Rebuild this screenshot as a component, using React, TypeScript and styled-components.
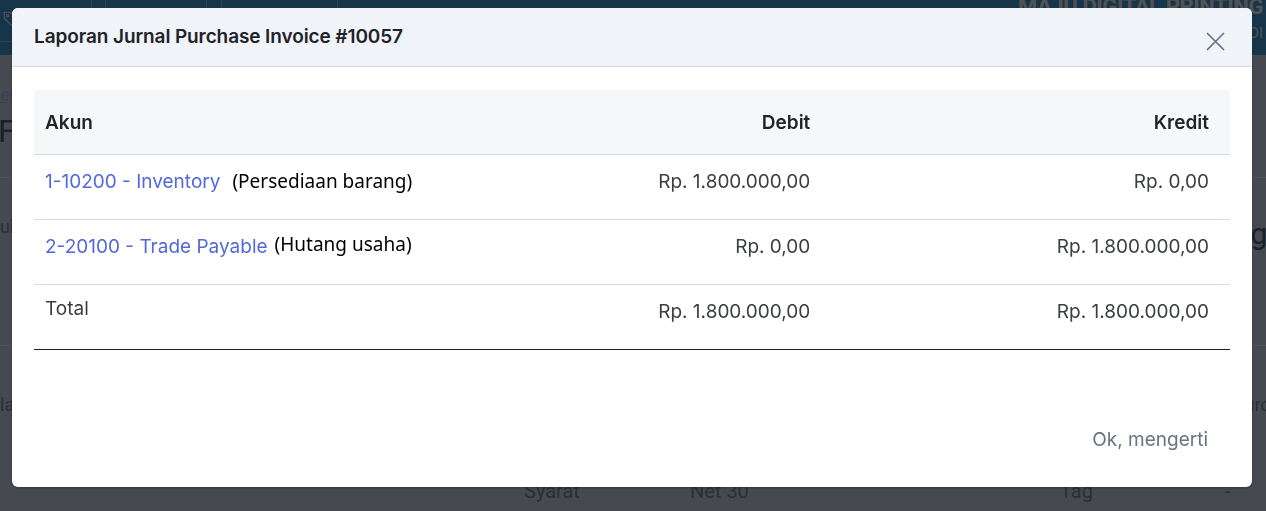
import styled, { createGlobalStyle } from 'styled-components'

const GlobalStyle = createGlobalStyle`
  html, body {
    margin: 0;
    padding: 0;
  }
  body {
    font-family: Inter, "Liberation Sans", sans-serif;
    overflow: hidden;
  }
  * {
    box-sizing: border-box;
  }
`

type JournalLine = {
  code: string
  name: string
  note: string
  noteGap: number
  noteLift: number
  debit: string
  credit: string
}

const lines: JournalLine[] = [
  {
    code: '1-10200',
    name: 'Inventory',
    note: '(Persediaan barang)',
    noteGap: 12,
    noteLift: 1,
    debit: 'Rp. 1.800.000,00',
    credit: 'Rp. 0,00',
  },
  {
    code: '2-20100',
    name: 'Trade Payable',
    note: '(Hutang usaha)',
    noteGap: 7,
    noteLift: 3,
    debit: 'Rp. 0,00',
    credit: 'Rp. 1.800.000,00',
  },
]

function TagIcon() {
  return (
    <svg width="18" height="18" viewBox="0 0 24 24" fill="none" stroke="#ffffff" strokeWidth="1.6">
      <path d="M3 3h8l10 10-8 8L3 11z" />
      <circle cx="7.5" cy="7.5" r="1.5" />
    </svg>
  )
}

function CloseIcon() {
  return (
    <svg width="19" height="19" viewBox="0 0 19 19" fill="none" stroke="#6b7280" strokeWidth="1.7" strokeLinecap="round">
      <path d="M1.5 1.5l16 16M17.5 1.5l-16 16" />
    </svg>
  )
}

function App() {
  return (
    <>
      <GlobalStyle />
      <Page>
        {/* app behind the dialog */}
        <NavBar>
          <NavMenu>
            <NavTab width={92}>
              <TagIcon />
            </NavTab>
            <NavTab width={14} />
            <NavTab width={101} />
            <NavTab width={15} />
            <NavTab width={116} />
          </NavMenu>
          <Brand>
            <BrandName>MAJU DIGITAL PRINTING</BrandName>
            <BrandSub>KANTOR PUSAT · MEDAN · DI</BrandSub>
          </Brand>
        </NavBar>
        <Content>
          <BackLink>ePurchase / Faktur</BackLink>
          <PageTitle>Faktur Pembelian #10057</PageTitle>
          <Section>
            <InfoLabel>ukuran</InfoLabel>
            <SideHeading>Tagihan</SideHeading>
          </Section>
          <Section offset={48}>
            <InfoLabel>lampiran</InfoLabel>
            <SideLabel>Purchase Order</SideLabel>
          </Section>
          <TermsRow>
            <TermsCell>Syarat</TermsCell>
            <TermsCell>Net 30</TermsCell>
            <TermsCell>Tag</TermsCell>
            <TermsCell>-</TermsCell>
          </TermsRow>
        </Content>

        {/* journal dialog */}
        <Overlay>
          <Modal>
            <ModalHeader>
              <ModalTitle>Laporan Jurnal Purchase Invoice #10057</ModalTitle>
              <CloseButton aria-label="Tutup">
                <CloseIcon />
              </CloseButton>
            </ModalHeader>
            <ModalBody>
              <Table>
                <thead>
                  <tr>
                    <Th>Akun</Th>
                    <Th align="right">Debit</Th>
                    <Th align="right">Kredit</Th>
                  </tr>
                </thead>
                <tbody>
                  {lines.map((line) => (
                    <tr key={line.code}>
                      <Td>
                        <AccountCell>
                          <AccountLink href="#">
                            {line.code} - {line.name}
                          </AccountLink>
                          <AccountNote gap={line.noteGap} lift={line.noteLift}>
                            {line.note}
                          </AccountNote>
                        </AccountCell>
                      </Td>
                      <Td align="right">{line.debit}</Td>
                      <Td align="right">{line.credit}</Td>
                    </tr>
                  ))}
                  <tr>
                    <TotalTd>Total</TotalTd>
                    <TotalTd align="right" amount>
                      Rp. 1.800.000,00
                    </TotalTd>
                    <TotalTd align="right" amount>
                      Rp. 1.800.000,00
                    </TotalTd>
                  </tr>
                </tbody>
              </Table>
            </ModalBody>
            <ModalFooter>
              <GhostButton>Ok, mengerti</GhostButton>
            </ModalFooter>
          </Modal>
        </Overlay>
      </Page>
    </>
  )
}

export default App

// BACKGROUND PAGE
const Page = styled.div`
  position: relative;
  height: 511px;
  overflow: hidden;
  background-color: #d8e4f7;
  font-family: Roboto, "Liberation Sans", sans-serif;
`

const NavBar = styled.header`
  height: 55px;
  display: flex;
  justify-content: space-between;
  background-color: #45a2e7;
`

const NavMenu = styled.nav`
  display: flex;
  height: 42px;
  border-bottom: 1px solid rgba(255, 255, 255, 0.45);
`

const NavTab = styled.div<{ width: number }>`
  width: ${(p) => p.width}px;
  border-right: 1px solid rgba(255, 255, 255, 0.5);
  display: flex;
  align-items: flex-start;
  padding: 10px 0 0 2px;
`

const Brand = styled.div`
  display: flex;
  flex-direction: column;
  align-items: flex-end;
  padding-right: 3px;
  color: #ffffff;
`

const BrandName = styled.div`
  margin-top: -6px;
  font-size: 22px;
  line-height: 26px;
  font-weight: 700;
  letter-spacing: -0.4px;
`

const BrandSub = styled.div`
  margin-top: 4px;
  font-size: 15px;
  line-height: 18px;
`

const Content = styled.main`
  display: flex;
  flex-direction: column;
`

const BackLink = styled.a`
  margin-top: 30px;
  font-size: 18px;
  line-height: 20px;
  color: #b8d0ff;
  text-decoration: underline;
`

const PageTitle = styled.h1`
  margin: 8px 0 0 -2px;
  font-size: 32px;
  line-height: 36px;
  font-weight: 400;
  color: #596679;
  padding-bottom: 28px;
`

const Section = styled.section<{ offset?: number }>`
  display: flex;
  justify-content: space-between;
  align-items: flex-start;
  height: 168px;
  border-top: 1px solid #ffffff;
  padding-top: ${(p) => p.offset ?? 38}px;
`

const InfoLabel = styled.span`
  font-size: 18px;
  line-height: 22px;
  color: #8693a2;
`

const SideHeading = styled.span`
  margin-top: 2px;
  margin-right: -58px;
  font-size: 30px;
  line-height: 32px;
  color: #596679;
`

const SideLabel = styled.span`
  margin-right: -91px;
  font-size: 18px;
  line-height: 22px;
  color: #8693a2;
`

const TermsRow = styled.div`
  display: grid;
  grid-template-columns: 524px 166px 370px 165px 1fr;
  margin-top: -34px;
  font-size: 20px;
  color: #8693a2;
`

const TermsCell = styled.span`
  &:first-child {
    grid-column: 2;
  }
`

// DIALOG
const Overlay = styled.div`
  position: fixed;
  inset: 0;
  display: flex;
  align-items: flex-start;
  padding: 8px 14px 0 12px;
  background-color: rgba(0, 0, 0, 0.68);
`

const Modal = styled.div`
  width: 100%;
  background-color: #ffffff;
  border-radius: 6px;
  overflow: hidden;
  font-family: Inter, "Liberation Sans", sans-serif;
  box-shadow: 0 1px 3px rgba(0, 0, 0, 0.25);
`

const ModalHeader = styled.div`
  height: 59px;
  display: flex;
  align-items: center;
  justify-content: space-between;
  padding: 0 27px 0 22px;
  background-color: #f0f3f8;
  border-bottom: 1px solid #d3d9e2;
`

const ModalTitle = styled.h2`
  margin: 0;
  font-size: 19px;
  line-height: 24px;
  font-weight: 600;
  letter-spacing: -0.1px;
  color: #1f2329;
`

const CloseButton = styled.button`
  display: flex;
  margin-top: 8px;
  padding: 0;
  border: none;
  background: none;
  cursor: pointer;
`

const ModalBody = styled.div`
  padding: 23px 22px 0;
`

const Table = styled.table`
  width: 100%;
  table-layout: fixed;
  border-collapse: separate;
  border-spacing: 0;
  font-size: 19px;
`

const Th = styled.th<{ align?: 'left' | 'right' }>`
  height: 65px;
  padding: 0 21px 0 11px;
  text-align: ${(p) => p.align ?? 'left'};
  font-weight: 600;
  color: #222529;
  background-color: #f6f7f9;
  border-bottom: 1px solid #d5dae1;
`

const Td = styled.td<{ align?: 'left' | 'right' }>`
  height: 65px;
  padding: 15px 21px 0 11px;
  vertical-align: top;
  text-align: ${(p) => p.align ?? 'left'};
  line-height: 24px;
  color: #3b3e42;
  white-space: nowrap;
  border-bottom: 1px solid #d5dae1;
`

const TotalTd = styled(Td)<{ amount?: boolean }>`
  padding-top: ${(p) => (p.amount ? 15 : 12)}px;
  border-bottom: 1px solid #222222;
`

const AccountCell = styled.div`
  display: flex;
  align-items: flex-start;
  flex-wrap: nowrap;
`

const AccountLink = styled.a`
  flex-shrink: 0;
  color: #5468dc;
  text-decoration: none;
`

const AccountNote = styled.span<{ gap: number; lift: number }>`
  flex-shrink: 0;
  margin-left: ${(p) => p.gap}px;
  margin-top: -${(p) => p.lift}px;
  font-family: "Noto Sans", "DejaVu Sans", sans-serif;
  font-size: 19px;
  color: #000000;
`

const ModalFooter = styled.div`
  display: flex;
  justify-content: flex-end;
  padding: 67px 22px 26px;
`

const GhostButton = styled.button`
  height: 44px;
  padding: 0 22px;
  border: none;
  background: none;
  font-family: Inter, "Liberation Sans", sans-serif;
  font-size: 19px;
  color: #6b7280;
  cursor: pointer;
`
